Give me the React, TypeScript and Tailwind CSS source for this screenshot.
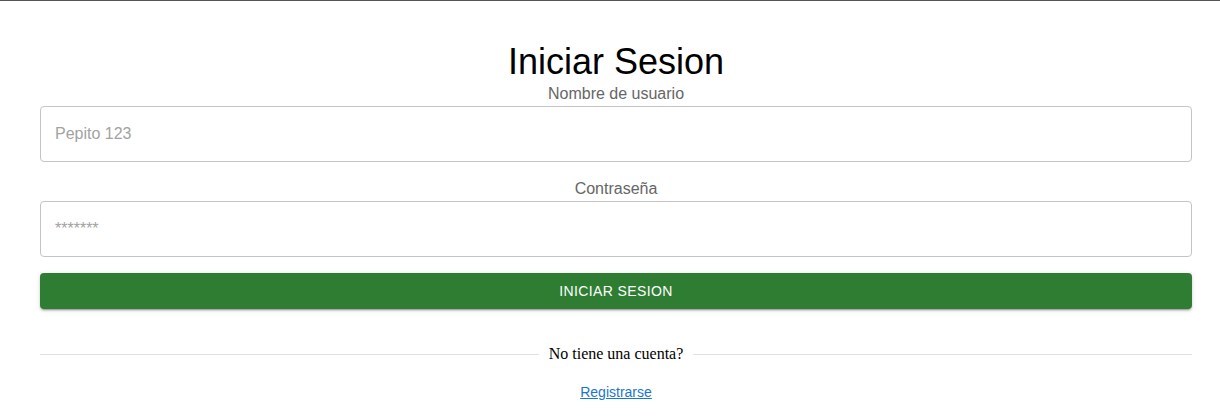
export default function App() {
  return (
    <div
      className="min-h-[416px] bg-white border-t border-[#555555] pl-10 pr-[28px] pt-[40px]"
      style={{ fontFamily: "'Liberation Sans', Arial, sans-serif" }}
    >
      {/* Title */}
      <h1 className="text-center text-[36px] leading-[41px] text-black">
        Iniciar Sesion
      </h1>

      {/* Username */}
      <label className="block text-center text-[16px] leading-[24px] text-[#666666]">
        Nombre de usuario
      </label>
      <input
        type="text"
        placeholder="Pepito 123"
        className="block w-full h-[56px] px-[14px] rounded-[4px] border border-[#c4c4c4] text-[16px] text-black placeholder:text-[#a2a2a2] outline-none"
      />

      {/* Password */}
      <label className="block mt-[15px] text-center text-[16px] leading-[24px] text-[#666666]">
        Contraseña
      </label>
      <input
        type="password"
        placeholder="*******"
        className="block w-full h-[56px] px-[14px] rounded-[4px] border border-[#c4c4c4] text-[16px] text-black placeholder:text-[#a2a2a2] outline-none"
      />

      {/* Submit */}
      <button
        type="button"
        className="mt-4 block w-full h-[36px] rounded-[4px] bg-[#2e7d32] text-white text-[14px] uppercase tracking-[0.4px] shadow-[0_3px_1px_-2px_rgba(0,0,0,0.2),0_2px_2px_0_rgba(0,0,0,0.14),0_1px_5px_0_rgba(0,0,0,0.12)]"
      >
        Iniciar Sesion
      </button>

      {/* Divider */}
      <div className="mt-[33px] flex items-center">
        <div className="flex-1 border-t border-[#e0e0e0]" />
        <span
          className="px-[9.6px] text-[16px] leading-[24px] text-black"
          style={{ fontFamily: "'Liberation Serif', 'Times New Roman', serif" }}
        >
          No tiene una cuenta?
        </span>
        <div className="flex-1 border-t border-[#e0e0e0]" />
      </div>

      {/* Register link */}
      <div className="mt-[14px] text-center">
        <a href="#" className="text-[14px] leading-[20px] text-[#1976d2] underline">
          Registrarse
        </a>
      </div>
    </div>
  )
}
